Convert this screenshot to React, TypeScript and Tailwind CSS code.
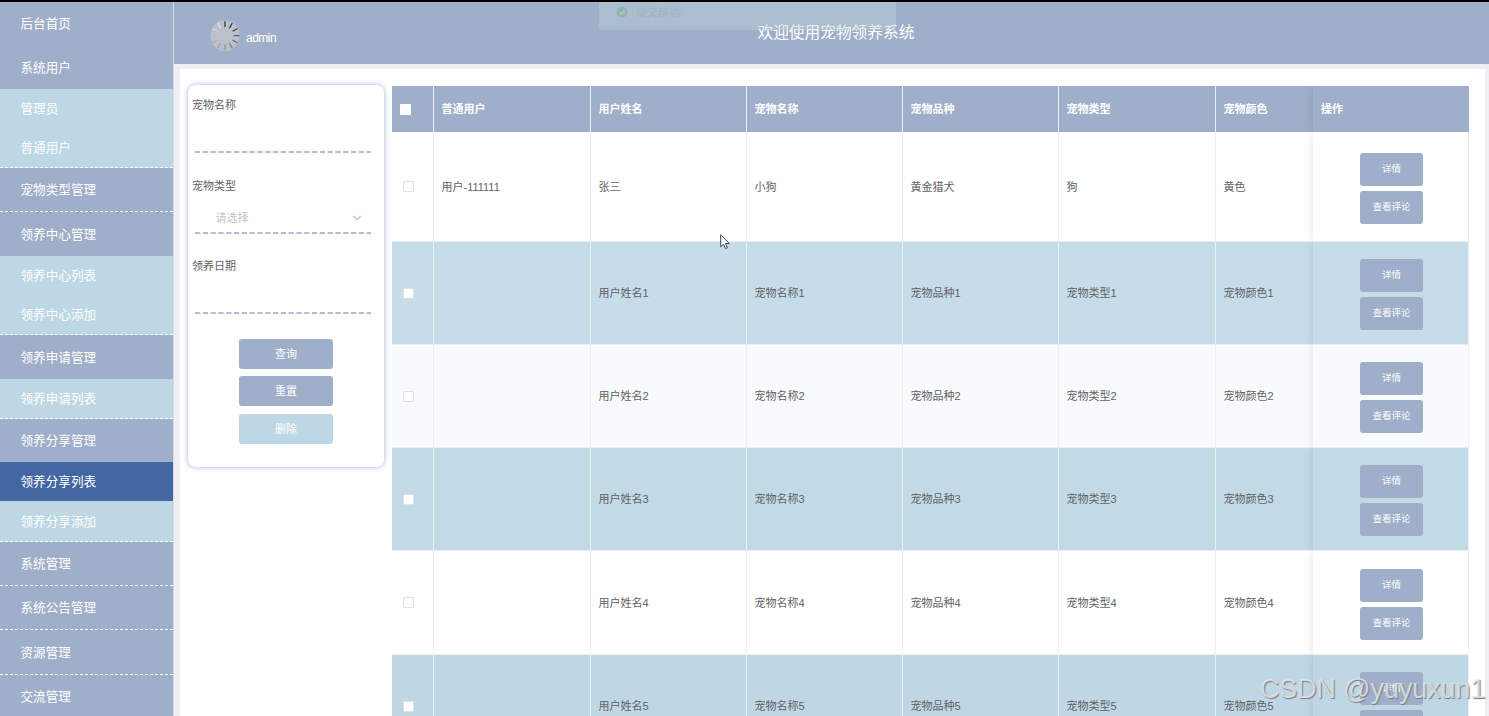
import clsx from "clsx";
import { ChevronDown } from "lucide-react";

type MenuItem = {
  label: string;
  kind: "group" | "sub" | "active";
  size: string;
  line?: boolean;
};

const menu: MenuItem[] = [
  { label: "后台首页", kind: "group", size: "h-[43px]" },
  { label: "系统用户", kind: "group", size: "h-11" },
  { label: "管理员", kind: "sub", size: "h-[39px]" },
  { label: "普通用户", kind: "sub", size: "h-10", line: true },
  { label: "宠物类型管理", kind: "group", size: "h-11", line: true },
  { label: "领养中心管理", kind: "group", size: "h-11" },
  { label: "领养中心列表", kind: "sub", size: "h-[39px]" },
  { label: "领养中心添加", kind: "sub", size: "h-10", line: true },
  { label: "领养申请管理", kind: "group", size: "h-11" },
  { label: "领养申请列表", kind: "sub", size: "h-10", line: true },
  { label: "领养分享管理", kind: "group", size: "h-[43px]" },
  { label: "领养分享列表", kind: "active", size: "h-[39px]" },
  { label: "领养分享添加", kind: "sub", size: "h-[41px]", line: true },
  { label: "系统管理", kind: "group", size: "h-11", line: true },
  { label: "系统公告管理", kind: "group", size: "h-11", line: true },
  { label: "资源管理", kind: "group", size: "h-[45px]", line: true },
  { label: "交流管理", kind: "group", size: "h-11", line: true },
];

const columns = ["普通用户", "用户姓名", "宠物名称", "宠物品种", "宠物类型", "宠物颜色"];

const rows = [
  { cells: ["用户-111111", "张三", "小狗", "黄金猎犬", "狗", "黄色"], style: "h-[110px] bg-white" },
  { cells: ["", "用户姓名1", "宠物名称1", "宠物品种1", "宠物类型1", "宠物颜色1"], style: "h-[103px] bg-[#c6dce9]" },
  { cells: ["", "用户姓名2", "宠物名称2", "宠物品种2", "宠物类型2", "宠物颜色2"], style: "h-[103px] bg-[#f9fafc]" },
  { cells: ["", "用户姓名3", "宠物名称3", "宠物品种3", "宠物类型3", "宠物颜色3"], style: "h-[103px] bg-[#c2d9e6]" },
  { cells: ["", "用户姓名4", "宠物名称4", "宠物品种4", "宠物类型4", "宠物颜色4"], style: "h-[104px] bg-white" },
  { cells: ["", "用户姓名5", "宠物名称5", "宠物品种5", "宠物类型5", "宠物颜色5"], style: "h-[103px] bg-[#bfd7e5]" },
];

const gridStyles = "grid shrink-0 grid-cols-[42px_157px_156px_156px_156px_157px_97px_156px]";
const cellStyles = "flex items-center border-r border-[#ebeef5]";
const actionStyles = "flex h-[33px] w-[63px] items-center justify-center rounded-[3px] bg-[#9faec9] text-[9.5px] text-white";

const spokes = [0, 30, 60, 90, 120, 150, 180, 210, 240, 270, 300, 330];
const spokeColors = ["#222", "#333", "#444", "#555", "#666", "#777", "#888", "#999", "#aaa", "#bbb", "#d4d4d4", "#e8e8e8"];

const Avatar = () => (
  <svg className="h-8 w-[30px]" viewBox="0 0 30 32">
    <ellipse cx="15" cy="15.7" rx="14.5" ry="15.6" fill="#bcc0ca" />
    {spokes.map((deg, i) => (
      <line key={deg} x1="15" y1="1.2" x2="15" y2="7" stroke={spokeColors[i]} strokeWidth="1.1" transform={`rotate(${deg} 15 15.7)`} />
    ))}
  </svg>
);

const Sidebar = () => (
  <aside className="w-[174px] shrink-0 border-r border-[#d5dbe7] bg-[#9faec9]">
    {menu.map((item) => (
      <div
        key={item.label}
        className={clsx(
          "flex items-center pt-[2px] pl-[20.5px] text-[12.6px] text-white",
          item.size,
          item.kind === "sub" && "bg-[#bed7e4]",
          item.kind === "active" && "bg-[#4267a3]",
          item.line && "border-b border-dashed border-white"
        )}
      >
        {item.label}
      </div>
    ))}
  </aside>
);

const Underline = () => (
  <svg className="block h-[2px] w-[180px]" viewBox="0 0 180 2">
    <line x1="3" y1="1" x2="179" y2="1" stroke="#9ba9c8" strokeWidth="1.7" strokeDasharray="5.2 2.6" />
  </svg>
);

const Field = ({ label, select }: { label: string; select?: boolean }) => (
  <div className="h-[80.5px] pl-1">
    <div className="flex h-10 items-center pt-px text-[11px] text-[#606266]">{label}</div>
    <div className="flex h-[26px] items-center justify-between pr-5 pb-px pl-[23.5px] text-[11px] text-[#c0c4cc]">
      {select && (
        <>
          <span>请选择</span>
          <ChevronDown size={14} strokeWidth={2} />
        </>
      )}
    </div>
    <Underline />
  </div>
);

const SearchForm = () => {
  const buttonStyles = "flex h-[30px] w-[94px] items-center justify-center rounded-[3px] pt-px text-[11px] text-white";

  return (
    <div className="mt-4 ml-2 h-[382px] w-[196px] shrink-0 rounded-lg bg-white shadow-[0_0_5px_1px_#bcc8de]">
      <Field label="宠物名称" />
      <Field label="宠物类型" select />
      <Field label="领养日期" />
      <div className="mt-[12px] flex flex-col items-center gap-[7.5px]">
        <button className={clsx(buttonStyles, "bg-[#9faec9]")}>查询</button>
        <button className={clsx(buttonStyles, "bg-[#9faec9]")}>重置</button>
        <button className={clsx(buttonStyles, "bg-[#bed7e4]")}>删除</button>
      </div>
    </div>
  );
};

const PetTable = () => (
  <div className="mt-[17px] ml-2 flex w-[1077px] shrink-0 flex-col text-[11px]">
    <div className={clsx(gridStyles, "h-[46px] bg-[#9faec9] font-bold text-white")}>
      <div className={clsx(cellStyles, "pl-2")}>
        <span className="h-[11px] w-[11px] rounded-[1px] bg-white" />
      </div>
      {columns.map((name, i) => (
        <div key={name} className={clsx(cellStyles, "pt-px pl-[7.5px]", i === 5 && "border-r-0")}>{name}</div>
      ))}
      <div className="flex items-center pt-px pl-2 shadow-[0_0_9px_rgba(0,0,0,0.12)] [clip-path:inset(0_0_0_-12px)]">操作</div>
    </div>
    {rows.map((row, r) => (
      <div key={r} className={clsx(gridStyles, row.style, "text-[#606266]")}>
        <div className={clsx(cellStyles, "border-b pl-[11px]")}>
          <span className="h-[11px] w-[11px] rounded-[1px] border border-[#dcdfe6] bg-white" />
        </div>
        {row.cells.map((text, i) => (
          <div key={i} className={clsx(cellStyles, "border-b pt-px pl-[7.5px]", i === 5 && "border-r-0")}>{text}</div>
        ))}
        <div className="flex flex-col items-center justify-center gap-[5px] border-r border-b border-[#ebeef5] pt-[3px] pl-[2px] shadow-[0_0_9px_rgba(0,0,0,0.12)] [clip-path:inset(0_0_0_-12px)]">
          <button className={actionStyles}>详情</button>
          <button className={actionStyles}>查看评论</button>
        </div>
      </div>
    ))}
  </div>
);

const App = () => {
  return (
    <div className="relative flex h-[716px] w-[1489px] overflow-hidden border-t-2 border-black bg-[#eeeef3] font-['Liberation_Sans','Noto_Sans_CJK_SC',sans-serif]">
      <Sidebar />

      <div className="flex min-w-0 flex-1 flex-col">
        {/* HEADER */}
        <header className="flex h-[62px] shrink-0 items-center bg-[#9faec9] pl-9 text-white">
          <div className="flex w-[547.5px] items-center gap-[6px] pt-[5px]">
            <Avatar />
            <span className="pt-[5px] text-[12px] tracking-[-0.5px]">admin</span>
          </div>
          <h1 className="text-[15.7px]">欢迎使用宠物领养系统</h1>
        </header>

        {/* CONTENT */}
        <main className="mt-[5px] mr-1 ml-[6px] flex min-h-0 flex-1 items-start overflow-hidden bg-white">
          <SearchForm />
          <PetTable />
        </main>
      </div>

      {/* TOAST */}
      <div className="absolute top-0 left-[599px] flex h-7 w-[297px] items-start gap-2 rounded-b-[3px] bg-[#c0d4d9]/40 pt-1 pl-[17px] text-[11px] leading-[12px] text-[#98b8be]">
        <svg className="h-3 w-3" viewBox="0 0 12 12">
          <circle cx="6" cy="6" r="5.5" fill="#8fb5b3" />
          <path d="M3.5 6.2 5.3 8 8.6 4.5" fill="none" stroke="#b5c8d3" strokeWidth="1.2" />
        </svg>
        提交成功!
      </div>

      {/* CURSOR */}
      <svg className="absolute top-[232px] left-[720px] h-4 w-[10px]" viewBox="0 0 10 16">
        <path d="M.7.8v12l2.8-2.6 2 4.4 2-.9-2-4.2h3.8z" fill="#fff" stroke="#3d4552" strokeWidth="1" />
      </svg>

      {/* WATERMARK */}
      <div className="absolute top-[667px] left-[1260px] text-[26.8px] leading-10 whitespace-nowrap text-[#e3e5e8]/85 [text-shadow:1px_1px_1px_#777d86]">
        CSDN @yuyuxun1
      </div>
    </div>
  );
};

export default App;
